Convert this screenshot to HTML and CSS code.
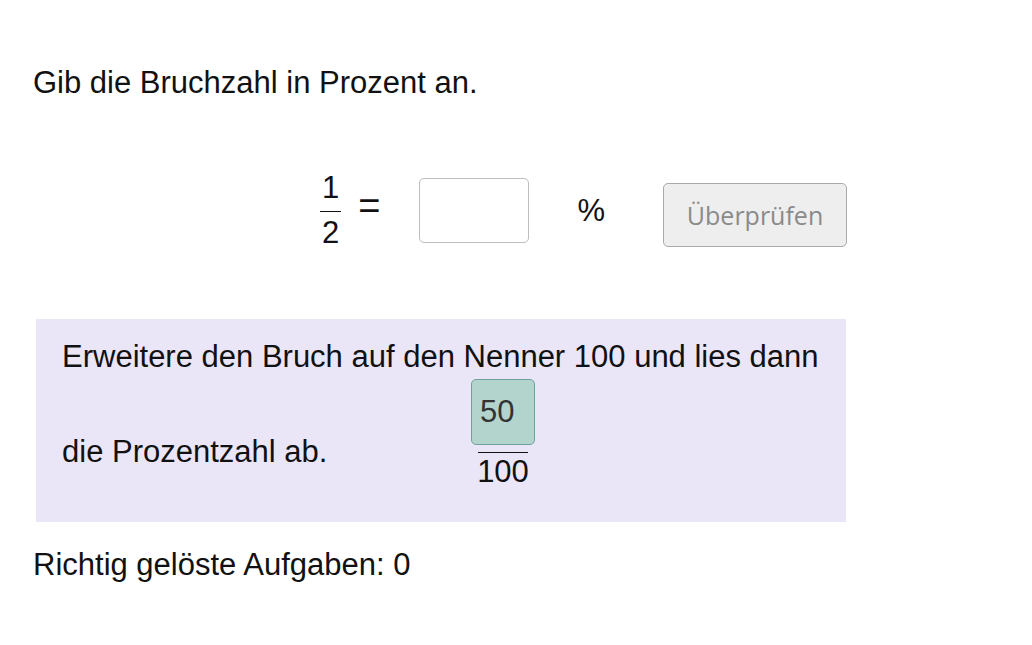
FILE: index.html
```html
<!DOCTYPE html>
<html lang="de">
<head>
    <meta charset="UTF-8">
    <meta name="viewport" content="width=device-width, initial-scale=1.0">
    <title>Bruchzahl in Prozent</title>
    <link rel="stylesheet" href="styles.css">
</head>
<body>
    <div class="page">
        <!-- Aufgabe -->
        <p class="task">Gib die Bruchzahl in Prozent an.</p>

        <div class="answer-row">
            <div class="fraction">
                <span class="num">1</span>
                <span class="den">2</span>
            </div>
            <span class="equals">=</span>
            <input class="answer-input" type="text">
            <span class="percent">%</span>
            <button class="check-button">Überprüfen</button>
        </div>

        <!-- Hinweis -->
        <div class="hint">
            <p class="hint-line">Erweitere den Bruch auf den Nenner 100 und lies dann</p>
            <div class="hint-row">
                <span class="hint-text">die Prozentzahl ab.</span>
                <div class="fraction hint-fraction">
                    <span class="num filled">50</span>
                    <span class="den">100</span>
                </div>
            </div>
        </div>

        <p class="score">Richtig gelöste Aufgaben: 0</p>
    </div>
</body>
</html>
```

FILE: styles.css
```css
:root {
    --text-color: #111;
    --hint-bg: #ebe6f7;
    --filled-bg: #b3d3cd;
    --filled-border: #6fa39a;
    --border-color: #bdbdbd;
}

body {
    margin: 0;
    padding: 0;
    background: white;
    font-family: 'Liberation Sans', Arial, sans-serif;
    color: var(--text-color);
}

.page {
    padding: 64px 0 0 33px;
    font-size: 31px;
    line-height: 1.2;
}

.task {
    margin: 0;
}

/* Eingabezeile */
.answer-row {
    display: flex;
    align-items: center;
    margin-top: 72px;
    margin-left: 287px;
}

.fraction {
    display: flex;
    flex-direction: column;
    align-items: center;
}

.fraction .num {
    padding: 0 2px 9px;
    border-bottom: 1.5px solid var(--text-color);
    line-height: 28px;
}

.fraction .den {
    line-height: 28px;
    padding-top: 7px;
}

.equals {
    margin-left: 17px;
    font-size: 38px;
    margin-top: -6px;
}

.answer-input {
    margin-left: 39px;
    border: 1.5px solid var(--border-color);
    border-radius: 5px;
    box-sizing: border-box;
    width: 110px;
    height: 65px;
    font: inherit;
    outline: none;
}

.percent {
    margin-left: 48px;
}

.check-button {
    margin-left: 58px;
    margin-top: 10px;
    width: 184px;
    height: 64px;
    background: #eeeeee;
    border: 1.5px solid #aaa;
    border-radius: 5px;
    font-family: 'Open Sans', sans-serif;
    font-size: 25px;
    color: #8a8a8a;
}

/* Hinweis */
.hint {
    margin-top: 72px;
    margin-left: 3px;
    width: 810px;
    height: 203px;
    box-sizing: border-box;
    padding: 19px 0 0 26px;
    background: var(--hint-bg);
}

.hint-line {
    margin: 0;
}

.hint-row {
    display: flex;
    align-items: flex-start;
    margin-top: 4px;
}

.hint-text {
    width: 409px;
    margin-top: 54px;
}

.hint-fraction .num.filled {
    box-sizing: border-box;
    width: 64px;
    height: 66px;
    margin-bottom: 11px;
    padding: 13px 0 0 8px;
    line-height: 37px;
    background: var(--filled-bg);
    border: 1.5px solid var(--filled-border);
    border-radius: 5px;
    color: #333;
    position: relative;
}

.hint-fraction .num.filled::after {
    content: "";
    position: absolute;
    left: 6px;
    right: 6px;
    bottom: -9px;
    border-bottom: 1.5px solid var(--text-color);
}

.hint-fraction .den {
    padding-top: 0;
    line-height: 32px;
}

.score {
    margin: 24px 0 0;
}
```
